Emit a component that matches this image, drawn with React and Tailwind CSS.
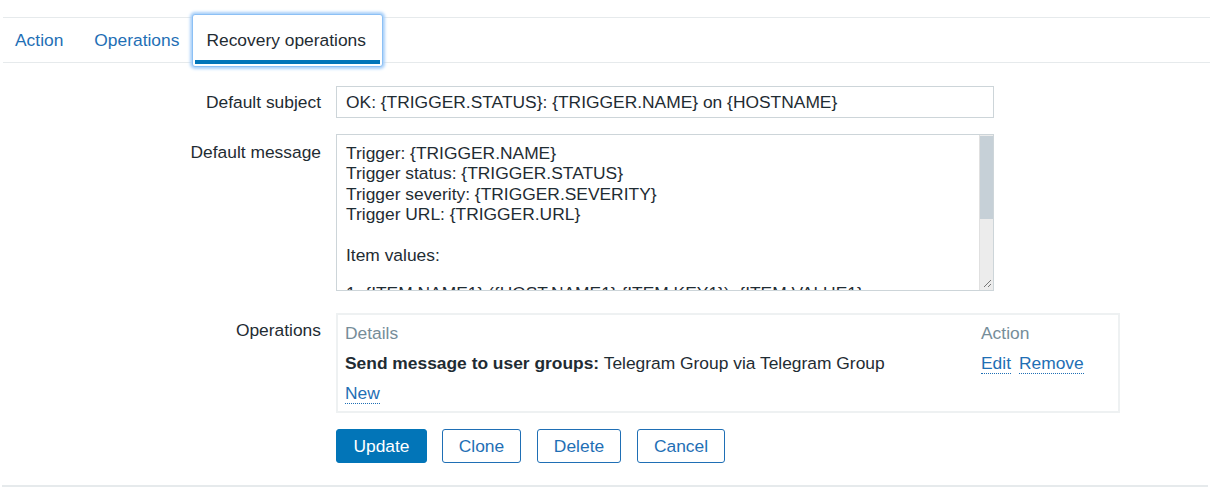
import React from 'react';

const messageLines = [
    "Trigger: {TRIGGER.NAME}",
    "Trigger status: {TRIGGER.STATUS}",
    "Trigger severity: {TRIGGER.SEVERITY}",
    "Trigger URL: {TRIGGER.URL}",
    "",
    "Item values:",
    "",
    "1. {ITEM.NAME1} ({HOST.NAME1}:{ITEM.KEY1}): {ITEM.VALUE1}",
];

const tabs = ["Action", "Operations", "Recovery operations"];

export default function App() {
    return (
        <div className="w-[1210px] h-[492px] bg-white text-[17.4px] text-[#1f2c33] font-['Liberation_Sans',Arial,sans-serif] overflow-hidden">
            <div className="h-[17px]" />

            {/* Tabs */}
            <div className="ml-[3px] border-t border-b border-[#e6eaec] h-[46px] flex items-stretch">
                {tabs.map((t, i) => {
                    const active = i === tabs.length - 1;
                    return active ? (
                        <div
                            key={t}
                            className="relative ml-[13px] -mt-[4px] h-[53px] w-[191px] flex items-start pt-[15px] pl-[13px] bg-white border border-[#8cc0f5] rounded-[3px] shadow-[0_0_3px_2px_#a9d0f9]"
                        >
                            <span className="leading-[20px]">{t}</span>
                            <div className="absolute left-[2px] right-[2px] top-[45px] h-[4px] bg-[#0275b8]" />
                        </div>
                    ) : (
                        <div key={t} className={`flex items-center pt-[1px] ${i === 0 ? 'pl-[12px] pr-[15px]' : 'pl-[16px]'} text-[#1f6fb5]`}>
                            {t}
                        </div>
                    );
                })}
            </div>

            {/* Form */}
            <div className="grid grid-cols-[321px_1fr] gap-x-[15px] mt-[23px]">
                <div className="text-right h-[32px] flex items-center justify-end">Default subject</div>
                <div className="w-[658px] h-[32px] border border-[#cdd5d9] flex items-center px-[9px]">
                    OK: {'{TRIGGER.STATUS}'}: {'{TRIGGER.NAME}'} on {'{HOSTNAME}'}
                </div>

                <div className="text-right mt-[16px] pt-[8px] leading-[20.4px]">Default message</div>
                <div className="mt-[16px] w-[658px] h-[157px] border border-[#cdd5d9] flex">
                    <div className="flex-1 overflow-hidden pl-[9px] pt-[8px] leading-[20.4px]">
                        {messageLines.map((l, i) => (
                            <div key={i} className={`h-[20.4px] whitespace-nowrap ${i === messageLines.length - 1 ? '-mt-[3px]' : ''}`}>{l}</div>
                        ))}
                    </div>
                    <div className="w-[14px] bg-[#ececec] border-l border-[#e0e0e0] flex flex-col">
                        <div className="h-[83px] bg-[#c6d0d7] mt-[1px]" />
                        <div className="flex-1" />
                        <div className="h-[14px] flex items-center justify-center">
                            <svg width="10" height="10" viewBox="0 0 10 10">
                                <path d="M9 2 L2 9 M9 6 L6 9" stroke="#777" strokeWidth="1" />
                            </svg>
                        </div>
                    </div>
                </div>

                <div className="text-right mt-[22px] pt-[7px] leading-[20px]">Operations</div>
                <div className="mt-[22px] w-[784px] h-[100px] border-2 border-[#eef1f2] px-[7px] pt-[8px]">
                    <div className="flex text-[#768d99] leading-[20px]">
                        <div className="w-[636px]">Details</div>
                        <div>Action</div>
                    </div>
                    <div className="flex mt-[10px] leading-[20px]">
                        <div className="w-[636px]">
                            <span className="font-bold">Send message to user groups:</span> Telegram Group via Telegram Group
                        </div>
                        <div className="flex gap-[8px] text-[#1f6fb5]">
                            <span className="border-b border-dotted border-[#1f6fb5]">Edit</span>
                            <span className="border-b border-dotted border-[#1f6fb5]">Remove</span>
                        </div>
                    </div>
                    <div className="mt-[9px] leading-[20px]">
                        <span className="text-[#1f6fb5] border-b border-dotted border-[#1f6fb5]">New</span>
                    </div>
                </div>

                <div />
                <div className="mt-[16px] flex gap-[15px]">
                    <button className="h-[34px] w-[91px] bg-[#0275b8] text-white rounded-[3px] border border-[#0275b8]">Update</button>
                    <button className="h-[34px] w-[79px] bg-white text-[#1f6fb5] rounded-[3px] border border-[#1f6fb5]">Clone</button>
                    <button className="h-[34px] w-[84px] bg-white text-[#1f6fb5] rounded-[3px] border border-[#1f6fb5] ml-[1px]">Delete</button>
                    <button className="h-[34px] w-[88px] bg-white text-[#1f6fb5] rounded-[3px] border border-[#1f6fb5] ml-[1px]">Cancel</button>
                </div>
            </div>

            <div className="mt-[22px] mx-[2px] border-t-2 border-[#e6eaec]" />
        </div>
    );
}
